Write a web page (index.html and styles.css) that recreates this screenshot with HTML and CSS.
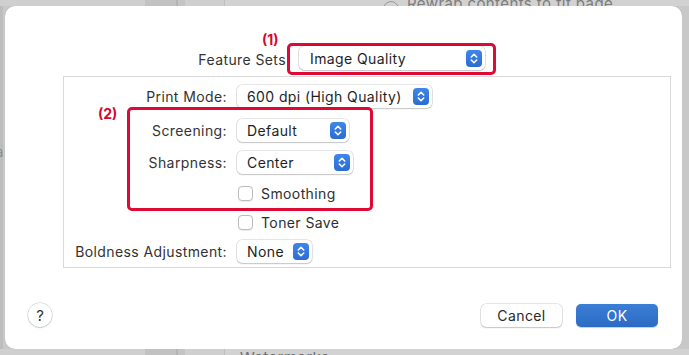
FILE: index.html
```html
<!DOCTYPE html>
<html lang="en">
<head>
  <meta charset="UTF-8">
  <meta name="viewport" content="width=device-width, initial-scale=1">
  <title>Feature Sets</title>
<link rel="stylesheet" href="styles.css">
</head>
<body>
  <div class="screen">
    <div class="strip strip-top">
      <span class="bg-disclosure"></span>
      <span class="bg-text">Rewrap contents to fit page</span>
    </div>
    <div class="middle">
      <div class="side side-left"><span class="bg-letter">a</span></div>
      <div class="sheet">
        <div class="feature-row">
          <div class="feature-label">Feature Sets</div>
          <div class="callout callout-1">
            <span class="callout-num num-1">(1)</span>
            <div class="popup popup-feature">
              <span class="popup-text">Image Quality</span>
              <span class="stepper"><svg viewBox="0 0 16 17" width="16" height="17"><path d="M5.3 7 8 4.3 10.7 7M5.3 10 8 12.7 10.7 10" fill="none" stroke="#fff" stroke-width="1.6" stroke-linecap="round" stroke-linejoin="round"/></svg></span>
            </div>
          </div>
        </div>

        <div class="group">
          <div class="row">
            <div class="label">Print Mode:</div>
            <div class="popup popup-mode">
              <span class="popup-text">600 dpi (High Quality)</span>
              <span class="stepper"><svg viewBox="0 0 16 17" width="16" height="17"><path d="M5.3 7 8 4.3 10.7 7M5.3 10 8 12.7 10.7 10" fill="none" stroke="#fff" stroke-width="1.6" stroke-linecap="round" stroke-linejoin="round"/></svg></span>
            </div>
          </div>

          <div class="callout callout-2">
            <span class="callout-num num-2">(2)</span>
            <div class="row">
              <div class="label label-in">Screening:</div>
              <div class="popup popup-screen">
                <span class="popup-text">Default</span>
                <span class="stepper"><svg viewBox="0 0 16 17" width="16" height="17"><path d="M5.3 7 8 4.3 10.7 7M5.3 10 8 12.7 10.7 10" fill="none" stroke="#fff" stroke-width="1.6" stroke-linecap="round" stroke-linejoin="round"/></svg></span>
              </div>
            </div>
            <div class="row row-gap">
              <div class="label label-in">Sharpness:</div>
              <div class="popup popup-sharp">
                <span class="popup-text">Center</span>
                <span class="stepper"><svg viewBox="0 0 16 17" width="16" height="17"><path d="M5.3 7 8 4.3 10.7 7M5.3 10 8 12.7 10.7 10" fill="none" stroke="#fff" stroke-width="1.6" stroke-linecap="round" stroke-linejoin="round"/></svg></span>
              </div>
            </div>
            <label class="check check-in">
              <span class="box"></span>
              <span>Smoothing</span>
            </label>
          </div>

          <label class="check check-out">
            <span class="box"></span>
            <span>Toner Save</span>
          </label>

          <div class="row row-bold">
            <div class="label">Boldness Adjustment:</div>
            <div class="popup popup-bold">
              <span class="popup-text">None</span>
              <span class="stepper"><svg viewBox="0 0 16 17" width="16" height="17"><path d="M5.3 7 8 4.3 10.7 7M5.3 10 8 12.7 10.7 10" fill="none" stroke="#fff" stroke-width="1.6" stroke-linecap="round" stroke-linejoin="round"/></svg></span>
            </div>
          </div>
        </div>

        <div class="footer">
          <button class="help">?</button>
          <div class="spacer"></div>
          <button class="btn">Cancel</button>
          <button class="btn btn-ok">OK</button>
        </div>
      </div>
      <div class="side side-right"></div>
    </div>
    <div class="strip strip-bottom">
      <span class="bg-text bg-water">Watermarks</span>
    </div>
  </div>
</body>
</html>
```

FILE: styles.css
```css
html, body {
  margin: 0;
  padding: 0;
}
body {
  background: #c9c9c9;
  font-family: Inter, "Liberation Sans", Arial, sans-serif;
  font-size: 14px;
  letter-spacing: 0.4px;
  color: #2a2a2a;
}
.screen {
  width: 689px;
  height: 355px;
  overflow: hidden;
  display: flex;
  flex-direction: column;
}

/* window content peeking out behind the sheet */
.strip {
  height: 6px;
  flex: none;
  overflow: hidden;
  position: relative;
  background: linear-gradient(90deg, #cfcfcf 0, #cfcfcf 145px, #c2c2c2 145px, #c2c2c2 176px, #b4b4b4 176px, #b4b4b4 178px, #c4c4c4 178px, #c4c4c4 185px, #cfcfcf 185px, #cfcfcf 224px, #bdbdbd 224px, #bdbdbd 225px, #d2d2d2 225px);
}
.strip-top {
  display: flex;
  align-items: flex-end;
  padding-left: 383px;
}
.bg-disclosure {
  width: 14px;
  height: 14px;
  border-radius: 50%;
  border: 1px solid #9a9a9a;
  margin-bottom: -11px;
  flex: none;
}
.bg-text {
  color: #7c7c7c;
  font-size: 15px;
  line-height: 18px;
  margin-left: 8px;
  margin-bottom: -7px;
  white-space: nowrap;
}
.strip-bottom {
  height: 6px;
  padding-left: 240px;
}
.bg-water {
  display: block;
  margin-left: 0;
  margin-top: 0;
  color: #6f6f6f;
}

.middle {
  display: flex;
  height: 343px;
  flex: none;
}
.side {
  flex: none;
  background: #c6c6c6;
  overflow: hidden;
}
.side-left {
  width: 5px;
  background: linear-gradient(90deg, #bdbdbd 0, #bdbdbd 3px, #c9c9c9 3px);
}
.bg-letter {
  display: block;
  margin-top: 138px;
  margin-left: -4px;
  color: #8a8a8a;
  font-size: 13px;
}
.side-right {
  width: 7px;
  background: #c8c8c8;
}

.sheet {
  width: 677px;
  flex: none;
  background: #fff;
  border-radius: 10px;
  box-shadow: 0 0 1px rgba(0, 0, 0, 0.25);
  display: flex;
  flex-direction: column;
  padding-top: 37px;
  box-sizing: border-box;
}

/* feature sets */
.feature-row {
  display: flex;
  align-items: center;
}
.feature-label {
  width: 282px;
  text-align: right;
  padding-right: 1px;
  box-sizing: border-box;
  color: #333;
}
.callout {
  border: 3px solid #dd0a35;
  border-radius: 5px;
  position: relative;
}
.callout-num {
  position: absolute;
  color: #d4082f;
  font-weight: bold;
  font-size: 14px;
  line-height: 14px;
  letter-spacing: 0;
}
.callout-1 {
  width: 209px;
  height: 32px;
  box-sizing: border-box;
  padding: 0 8px 2px 9px;
}
.num-1 {
  left: -28px;
  top: -13px;
}
.num-2 {
  left: -32px;
  top: -3px;
}

/* popup buttons */
.popup {
  height: 23px;
  box-sizing: border-box;
  background: #fff;
  border-radius: 5px;
  box-shadow: 0 0 0 0.5px rgba(0, 0, 0, 0.2), 0 1px 1.5px rgba(0, 0, 0, 0.14);
  display: flex;
  align-items: center;
  padding: 0 3px 0 10px;
  color: #1e1e1e;
}
.popup-text {
  flex: 1;
  white-space: nowrap;
}
.stepper {
  width: 16px;
  height: 17px;
  border-radius: 4px;
  background: linear-gradient(#3e86ea, #2c6cd2);
  display: flex;
  flex: none;
}
.popup-feature {
  height: 24px;
  width: 186px;
  padding-left: 11px;
}
.popup-mode {
  width: 195px;
}
.popup-screen {
  width: 112px;
}
.popup-sharp {
  width: 116px;
}
.popup-bold {
  width: 75px;
}

/* group box */
.group {
  margin-top: 1px;
  margin-left: 58px;
  width: 608px;
  height: 192px;
  box-sizing: border-box;
  border: 1px solid #d9d9d9;
  padding-top: 8px;
}
.row {
  display: flex;
  align-items: center;
  gap: 10px;
}
.label {
  width: 163px;
  flex: none;
  text-align: right;
  color: #333;
}
.label-in {
  width: 97px;
}
.callout-2 {
  margin-top: -1px;
  margin-left: 63px;
  width: 246px;
  height: 104px;
  box-sizing: border-box;
  padding-top: 9px;
}
.row-gap {
  margin-top: 9px;
}
.check {
  display: flex;
  align-items: center;
  gap: 8px;
  color: #2e2e2e;
  height: 15px;
}
.box {
  width: 15px;
  height: 15px;
  box-sizing: border-box;
  border: 1px solid #bdbdbd;
  border-radius: 4px;
  background: #fff;
  box-shadow: 0 0.5px 1px rgba(0, 0, 0, 0.08);
  flex: none;
}
.check-in {
  margin-top: 12px;
  margin-left: 108px;
}
.check-out {
  margin-top: 4px;
  margin-left: 174px;
}
.row-bold {
  margin-top: 10px;
}

/* bottom buttons */
.footer {
  display: flex;
  align-items: center;
  margin-top: 35px;
  padding: 0 24px 0 23px;
}
.spacer {
  flex: 1;
}
.help {
  width: 24px;
  height: 24px;
  border-radius: 50%;
  border: none;
  background: #fff;
  box-shadow: 0 0 0 0.5px rgba(0, 0, 0, 0.2), 0 1px 1.5px rgba(0, 0, 0, 0.15);
  font-family: inherit;
  font-size: 15px;
  color: #333;
  padding: 0;
}
.btn {
  height: 23px;
  width: 81px;
  border: none;
  border-radius: 5px;
  background: #fff;
  box-shadow: 0 0 0 0.5px rgba(0, 0, 0, 0.2), 0 1px 1.5px rgba(0, 0, 0, 0.14);
  font-family: inherit;
  font-size: 14px;
  letter-spacing: 0.4px;
  color: #2a2a2a;
  padding: 0;
}
.btn-ok {
  margin-left: 14px;
  width: 82px;
  background: linear-gradient(#3b7ed6, #2c6bc4);
  color: #fff;
  box-shadow: 0 0.5px 1px rgba(0, 0, 0, 0.2);
}
```
